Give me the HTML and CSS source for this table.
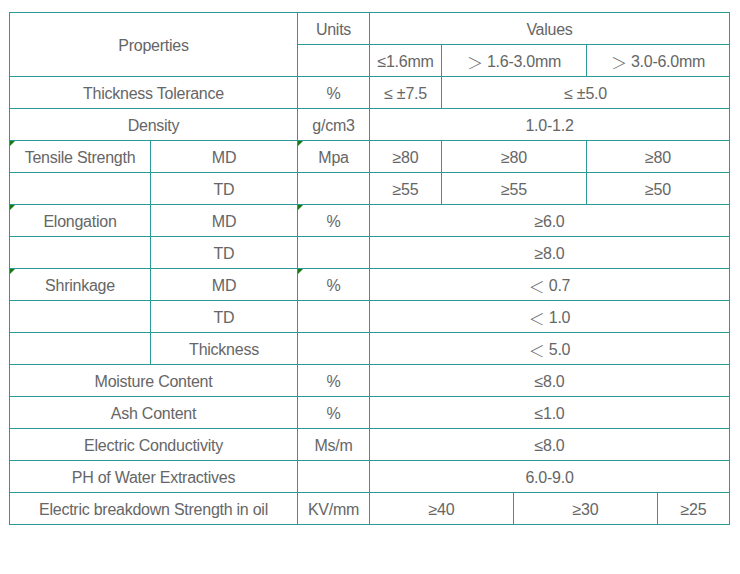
FILE: index.html
```html
<!DOCTYPE html>
<html>
<head>
<meta charset="utf-8">
<link rel="stylesheet" href="styles.css">
</head>
<body>
<div class="page">
  <div class="sheet">
    <div class="c" style="grid-column:1/3;grid-row:1/3">Properties</div>
    <div class="c">Units</div>
    <div class="c" style="grid-column:4/9">Values</div>

    <div class="c"></div>
    <div class="c">≤1.6mm</div>
    <div class="c" style="grid-column:5/7"><span class="fw">＞</span>1.6-3.0mm</div>
    <div class="c" style="grid-column:7/9"><span class="fw">＞</span>3.0-6.0mm</div>

    <div class="c" style="grid-column:1/3">Thickness Tolerance</div>
    <div class="c">%</div>
    <div class="c">≤ ±7.5</div>
    <div class="c" style="grid-column:5/9">≤ ±5.0</div>

    <div class="c" style="grid-column:1/3">Density</div>
    <div class="c">g/cm3</div>
    <div class="c" style="grid-column:4/9">1.0-1.2</div>

    <div class="c mark">Tensile Strength</div>
    <div class="c">MD</div>
    <div class="c mark">Mpa</div>
    <div class="c">≥80</div>
    <div class="c" style="grid-column:5/7">≥80</div>
    <div class="c" style="grid-column:7/9">≥80</div>

    <div class="c"></div>
    <div class="c">TD</div>
    <div class="c"></div>
    <div class="c">≥55</div>
    <div class="c" style="grid-column:5/7">≥55</div>
    <div class="c" style="grid-column:7/9">≥50</div>

    <div class="c mark">Elongation</div>
    <div class="c">MD</div>
    <div class="c mark">%</div>
    <div class="c" style="grid-column:4/9">≥6.0</div>

    <div class="c"></div>
    <div class="c">TD</div>
    <div class="c"></div>
    <div class="c" style="grid-column:4/9">≥8.0</div>

    <div class="c mark">Shrinkage</div>
    <div class="c">MD</div>
    <div class="c mark">%</div>
    <div class="c" style="grid-column:4/9"><span class="fw">＜</span>0.7</div>

    <div class="c"></div>
    <div class="c">TD</div>
    <div class="c"></div>
    <div class="c" style="grid-column:4/9"><span class="fw">＜</span>1.0</div>

    <div class="c"></div>
    <div class="c">Thickness</div>
    <div class="c"></div>
    <div class="c" style="grid-column:4/9"><span class="fw">＜</span>5.0</div>

    <div class="c" style="grid-column:1/3">Moisture Content</div>
    <div class="c">%</div>
    <div class="c" style="grid-column:4/9">≤8.0</div>

    <div class="c" style="grid-column:1/3">Ash Content</div>
    <div class="c">%</div>
    <div class="c" style="grid-column:4/9">≤1.0</div>

    <div class="c" style="grid-column:1/3">Electric Conductivity</div>
    <div class="c">Ms/m</div>
    <div class="c" style="grid-column:4/9">≤8.0</div>

    <div class="c" style="grid-column:1/3">PH of Water Extractives</div>
    <div class="c"></div>
    <div class="c" style="grid-column:4/9">6.0-9.0</div>

    <div class="c" style="grid-column:1/3">Electric breakdown Strength in oil</div>
    <div class="c">KV/mm</div>
    <div class="c" style="grid-column:4/6">≥40</div>
    <div class="c" style="grid-column:6/8">≥30</div>
    <div class="c">≥25</div>
  </div>
</div>
</body>
</html>
```

FILE: styles.css
```css
html, body {
  margin: 0;
  padding: 0;
  background: #ffffff;
}

.page {
  padding: 12px 0 0 9px;
}

.sheet {
  display: grid;
  grid-template-columns: 140px 146px 71px 71px 71px 72px 70px 71px;
  grid-auto-rows: 31px;
  gap: 1px;
  padding: 1px;
  width: max-content;
  background: #2a9b94;
  font-family: "Liberation Sans", Arial, "Noto Sans CJK SC", sans-serif;
  font-size: 16px;
  color: #666666;
}

.c {
  position: relative;
  display: flex;
  align-items: center;
  justify-content: center;
  padding-top: 2px;
  background: #ffffff;
  white-space: nowrap;
  letter-spacing: -0.25px;
}

.fw {
  display: inline-block;
  width: 16px;
  margin-right: 4px;
  text-align: center;
  font-family: "Noto Sans CJK SC", sans-serif;
  font-weight: 300;
}

.mark::before {
  content: "";
  position: absolute;
  left: 0;
  top: 0;
  width: 0;
  height: 0;
  border-top: 5px solid #1a7a1a;
  border-right: 5px solid transparent;
}
```
